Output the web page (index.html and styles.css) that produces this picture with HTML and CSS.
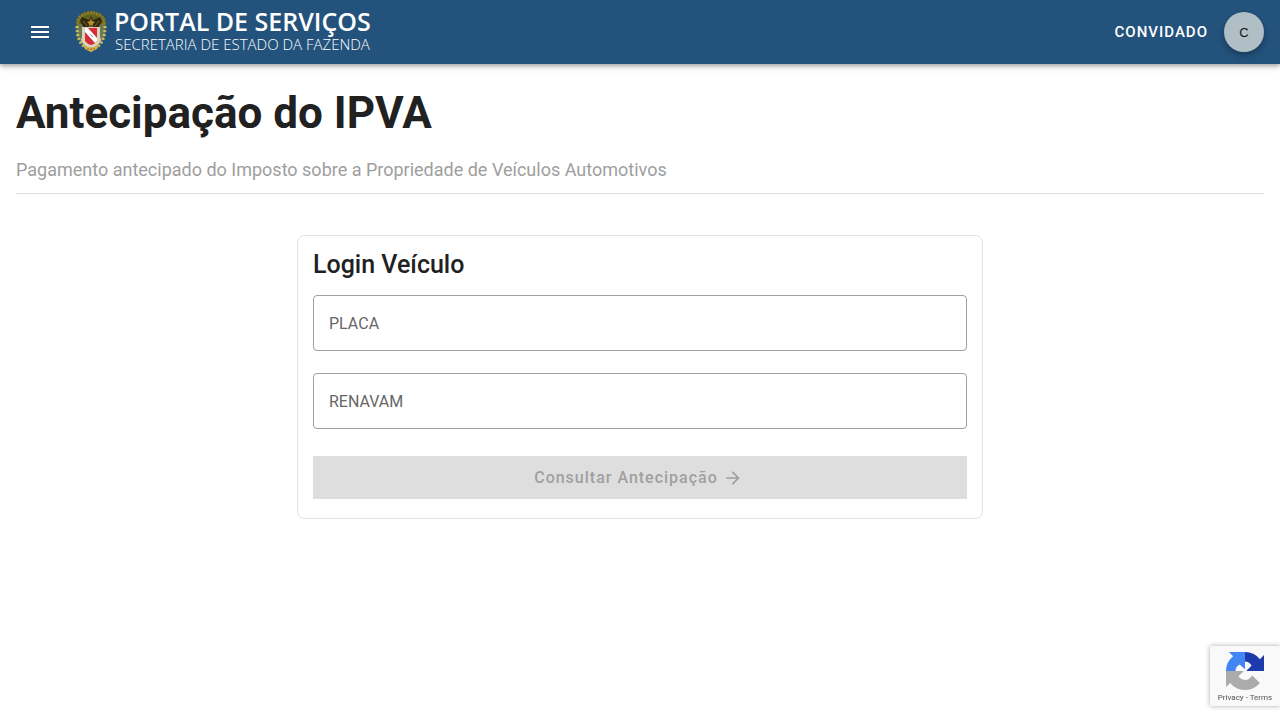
FILE: index.html
```
<!DOCTYPE html>
<html lang="pt-BR">
<head>
<meta charset="UTF-8">
<meta name="viewport" content="width=device-width, initial-scale=1.0">
<title>Antecipação do IPVA</title>
<link rel="stylesheet" href="styles.css">
</head>
<body>

<header class="toolbar">
    <button type="button" class="menu-button" aria-label="Menu">
        <svg width="24" height="24" viewBox="0 0 24 24" fill="currentColor"><path d="M3 6h18v2H3zm0 5h18v2H3zm0 5h18v2H3z"/></svg>
    </button>
    <a href="#" class="brand">
        <svg class="crest" width="34" height="42" viewBox="0 0 34 42">
            <ellipse cx="17" cy="12" rx="15" ry="12" fill="#62601f"/>
            <ellipse cx="17" cy="11" rx="13" ry="9" fill="none" stroke="#8d8028" stroke-width="3" stroke-dasharray="2 1"/>
            <path d="M3 13q-1 8 1 14l5 8 5 4 3 2 3-2 5-4 5-8q2-6 1-14" fill="#6d7650"/>
            <path d="M3 15q0 16 8 21M31 15q0 16-8 21" fill="none" stroke="#d1bf54" stroke-width="3" stroke-dasharray="2 2"/>
            <path d="M6 20q1 9 6 15M28 20q-1 9-6 15" fill="none" stroke="#4e8b8a" stroke-width="2" stroke-dasharray="1 3"/>
            <path d="M17 5l2 4 7-3 2 4-4 7-7-2-7 2-4-7 2-4 7 3z" fill="#302812"/>
            <path d="M9 10l4 5M25 10l-4 5" stroke="#8a6a20"/>
            <path d="M17 7l1 3 3 1-2 2v2l-2-1-2 1v-2l-2-2 3-1z" fill="#b98b28"/>
            <path d="M8 16h18v10l1 3q-3 7-10 8-7-1-10-8l1-3z" fill="#d9d2bd"/>
            <path d="M11 17h12v13q-2 3-6 4-4-1-6-4z" fill="#d82d38"/>
            <path d="M11 17h3l9 10v3l-2 2-10-11z" fill="#fff"/>
            <path d="M16 23l3 3" stroke="#7288ac"/>
            <path d="M9 34q8 5 16 0l-2 4-6 3-6-3z" fill="#d2b443"/>
            <path d="M13 38h8" stroke="#a35d2e" stroke-dasharray="2 1"/>
        </svg>
        <span class="brand-text">
            <strong class="brand-title">PORTAL DE SERVIÇOS</strong>
            <span class="brand-subtitle">SECRETARIA DE ESTADO DA FAZENDA</span>
        </span>
    </a>
    <span class="user-name">CONVIDADO</span>
    <button type="button" class="avatar" aria-label="Conta">C</button>
</header>

<main class="page">
    <h1>Antecipação do IPVA</h1>
    <p class="subtitle">Pagamento antecipado do Imposto sobre a Propriedade de Veículos Automotivos</p>

    <form class="card">
        <h2>Login Veículo</h2>
        <div class="field">
            <input type="text" id="placa" name="placa" placeholder=" " autocomplete="off">
            <label for="placa">PLACA</label>
        </div>
        <div class="field">
            <input type="text" id="renavam" name="renavam" placeholder=" " autocomplete="off">
            <label for="renavam">RENAVAM</label>
        </div>
        <button type="submit" class="submit" disabled>
            Consultar Antecipação
            <svg width="20" height="20" viewBox="0 0 24 24" fill="currentColor"><path d="M12 4l-1.4 1.4 5.6 5.6H4v2h12.2l-5.6 5.6L12 20l8-8z"/></svg>
        </button>
    </form>
</main>

<aside class="recaptcha">
    <svg width="38" height="38" viewBox="0 0 64 64">
        <path fill="#1c3aa9" d="M64 32V5l-7 7A32 32 0 0 0 32 0v16q7 0 11 7l-9 9z"/>
        <path fill="#4285f4" d="M32 0H5l7 7A32 32 0 0 0 0 32h16q0-7 7-11l9 8z"/>
        <path fill="#ababab" d="M0 32v27l7-7a32 32 0 0 0 50 0L44 39q-4 8-12 8-7 0-11-6l9-9z"/>
    </svg>
    <div class="recaptcha-links"><a href="#">Privacy</a> - <a href="#">Terms</a></div>
</aside>

</body>
</html>
```

FILE: styles.css
```
* {
    box-sizing: border-box;
}
body {
    margin: 0;
    font-family: Roboto, sans-serif;
    font-size: 16px;
    color: #212121;
    background-color: #fff;
}
h1, h2, p {
    margin: 0;
}
button {
    font-family: inherit;
    border: none;
    cursor: pointer;
}
a {
    color: inherit;
    text-decoration: none;
}
svg {
    display: block;
    flex-shrink: 0;
}

/* Top bar */
.toolbar {
    display: flex;
    align-items: center;
    height: 64px;
    padding: 0 16px;
    color: #fff;
    background-color: #23527c;
    box-shadow: 0 2px 4px rgba(0, 0, 0, 0.3), 0 4px 8px rgba(0, 0, 0, 0.08);
}
.menu-button {
    padding: 12px;
    color: #fff;
    background: none;
}
.brand {
    display: flex;
    align-items: center;
    gap: 6px;
    margin-left: 10px;
}
.brand-text {
    display: flex;
    flex-direction: column;
    padding-bottom: 4px;
    font-family: "Open Sans", sans-serif;
    white-space: nowrap;
}
.brand-title {
    font-size: 25px;
    font-weight: 600;
    line-height: 28px;
}
.brand-subtitle {
    padding-left: 1px;
    font-size: 15px;
    font-weight: 300;
    line-height: 18px;
}
.user-name {
    margin-left: auto;
    font-size: 15px;
    font-weight: 500;
    line-height: 20px;
    letter-spacing: 1px;
}
.avatar {
    width: 40px;
    height: 40px;
    margin-left: 16px;
    padding: 0;
    border-radius: 50%;
    font-family: "Liberation Sans", sans-serif;
    font-size: 13px;
    color: #111;
    background-color: #b0bec5;
    box-shadow: 0 3px 6px rgba(0, 0, 0, 0.3);
}

/* Content */
.page {
    padding: 16px;
}
h1 {
    font-size: 44px;
    line-height: 66px;
}
.subtitle {
    padding: 8px 0 7px;
    border-bottom: 1px solid #dedede;
    font-size: 18px;
    line-height: 32px;
    color: #9e9e9e;
}
.card {
    max-width: 686px;
    margin: 41px auto 0;
    padding: 13px 15px 19px;
    border: 1px solid #e4e4e4;
    border-radius: 8px;
}
h2 {
    margin-bottom: 14px;
    font-size: 25px;
    font-weight: 500;
    line-height: 32px;
}
.field {
    position: relative;
    display: grid;
    align-items: center;
    margin-bottom: 22px;
}
.field input, .field label {
    grid-area: 1 / 1;
}
.field input {
    width: 100%;
    height: 56px;
    padding: 0 15px;
    border: 1px solid #9e9e9e;
    border-radius: 4px;
    font-family: inherit;
    font-size: 16px;
    color: inherit;
    background: none;
}
.field label {
    justify-self: start;
    margin-left: 12px;
    padding: 0 4px;
    color: #666;
    pointer-events: none;
}
.field input:focus + label,
.field input:not(:placeholder-shown) + label {
    align-self: start;
    margin-top: -8px;
    font-size: 12px;
    background-color: #fff;
}
.submit {
    display: flex;
    align-items: center;
    justify-content: center;
    gap: 5px;
    width: 100%;
    height: 43px;
    margin-top: 27px;
    padding-right: 9px;
    font-size: 16px;
    font-weight: 500;
    letter-spacing: 1px;
    color: #a0a0a0;
    background-color: #dedede;
}
.submit:disabled {
    cursor: default;
}

/* reCAPTCHA badge over the page corner */
.recaptcha {
    position: fixed;
    right: 0;
    bottom: 14px;
    display: flex;
    flex-direction: column;
    align-items: center;
    gap: 3px;
    width: 70px;
    height: 60px;
    padding-top: 6px;
    border-radius: 2px 0 0 2px;
    background-color: #f9f9f9;
    box-shadow: 0 0 5px #aaa;
}
.recaptcha-links {
    font-size: 8px;
    line-height: 10px;
    white-space: nowrap;
    color: #555;
}
```
